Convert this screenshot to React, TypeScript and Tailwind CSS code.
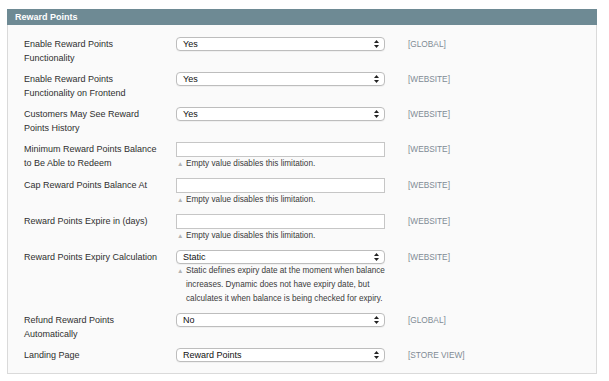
const font = { fontFamily: '"Liberation Sans", Arial, sans-serif' };

type Row = {
  label: string[];
  kind: "select" | "input";
  value?: string;
  hint?: string[];
  scope: string;
};

const rows: Row[] = [
  { label: ["Enable Reward Points", "Functionality"], kind: "select", value: "Yes", scope: "[GLOBAL]" },
  { label: ["Enable Reward Points", "Functionality on Frontend"], kind: "select", value: "Yes", scope: "[WEBSITE]" },
  { label: ["Customers May See Reward", "Points History"], kind: "select", value: "Yes", scope: "[WEBSITE]" },
  {
    label: ["Minimum Reward Points Balance", "to Be Able to Redeem"],
    kind: "input",
    hint: ["Empty value disables this limitation."],
    scope: "[WEBSITE]",
  },
  { label: ["Cap Reward Points Balance At"], kind: "input", hint: ["Empty value disables this limitation."], scope: "[WEBSITE]" },
  { label: ["Reward Points Expire in (days)"], kind: "input", hint: ["Empty value disables this limitation."], scope: "[WEBSITE]" },
  {
    label: ["Reward Points Expiry Calculation"],
    kind: "select",
    value: "Static",
    hint: [
      "Static defines expiry date at the moment when balance",
      "increases. Dynamic does not have expiry date, but",
      "calculates it when balance is being checked for expiry.",
    ],
    scope: "[WEBSITE]",
  },
  { label: ["Refund Reward Points", "Automatically"], kind: "select", value: "No", scope: "[GLOBAL]" },
  { label: ["Landing Page"], kind: "select", value: "Reward Points", scope: "[STORE VIEW]" },
];

function Arrows() {
  return (
    <svg width="5" height="8" viewBox="0 0 5 8" className="shrink-0">
      <path d="M2.5 0 L5 3 L0 3 Z" fill="#222" />
      <path d="M0 5 L5 5 L2.5 8 Z" fill="#222" />
    </svg>
  );
}

function SelectBox({ value }: { value: string }) {
  return (
    <div className="h-[14px] w-[209px] flex items-center justify-between rounded-[4px] border border-[#bdbdbd] bg-white pl-[6px] pr-[5px] shadow-[0_1px_0_rgba(0,0,0,0.04)]">
      <span className="text-[9px] leading-none text-[#111]">{value}</span>
      <Arrows />
    </div>
  );
}

function InputBox() {
  return <div className="h-[15px] w-[209px] border border-[#c6c6c6] bg-white" />;
}

export default function App() {
  return (
    <div className="min-h-screen bg-white pt-[9px] pl-[7px]" style={font}>
      <div className="w-[590px]">
        {/* Section header */}
        <div className="h-[16px] bg-[#6e8a94] flex items-center pl-[8px]">
          <span className="text-[9px] font-bold text-white leading-none">Reward Points</span>
        </div>
        {/* Section body */}
        <div className="border-x border-b border-[#dadada] bg-[#fafafa] pt-[12px] pb-[4px] pl-[16px]">
          {rows.map((r, i) => (
            <div key={i} className="flex pb-[7px]">
              <div className="w-[152px] text-[9px] leading-[14px] text-[#2f2f2f]">
                {r.label.map((l, j) => (
                  <div key={j}>{l}</div>
                ))}
              </div>
              <div className="w-[209px]">
                {r.kind === "select" ? <SelectBox value={r.value ?? ""} /> : <InputBox />}
                {r.hint && (
                  <div className="flex text-[8.2px] leading-[14px] text-[#3a3a3a]">
                    <span className="w-[10px] pl-[1px] text-[6.5px] text-[#b3b3b3]">▲</span>
                    <div>
                      {r.hint.map((h, j) => (
                        <div key={j}>{h}</div>
                      ))}
                    </div>
                  </div>
                )}
              </div>
              <div className="ml-[23px] text-[8.3px] leading-[14px] text-[#7f8b95]">{r.scope}</div>
            </div>
          ))}
        </div>
      </div>
    </div>
  );
}
